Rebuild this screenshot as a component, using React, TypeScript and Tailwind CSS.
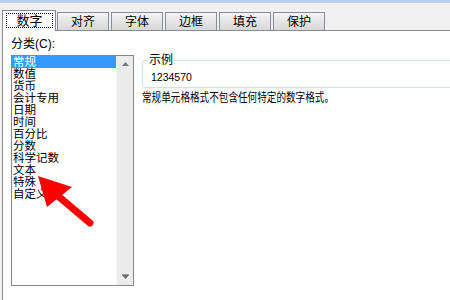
import React from 'react';

const tabs = ['对齐', '字体', '边框', '填充', '保护'];
const categories = ['常规', '数值', '货币', '会计专用', '日期', '时间', '百分比', '分数', '科学记数', '文本', '特殊', '自定义'];

const App: React.FC = () => {
  return (
    <div className="relative h-[300px] w-[450px] overflow-hidden bg-[#f0f0f0] font-['Liberation_Sans','Noto_Sans_CJK_SC',sans-serif] text-black">
      <div className="h-[3px] bg-[#b9d1ea]" />

      {/* tab strip */}
      <div className="flex h-[27px] items-end pl-[2px]">
        <div className="relative z-10 -mb-px h-[21px] w-[54px] border border-b-0 border-[#898c95] bg-white pl-[3px] pt-[2px]">
          <div className="flex h-[15px] w-[47px] items-center justify-center border border-dotted border-black text-[13px] leading-[13px]">
            数字
          </div>
        </div>
        {tabs.map((t, i) => (
          <div
            key={t}
            className={`flex h-[18px] w-[52px] items-center justify-center border border-b-0 border-[#898c95] bg-gradient-to-b from-[#f4f4f4] to-[#d7d7d7] text-[12px] leading-[12px] ${i === 0 ? 'ml-px' : 'ml-[2px]'}`}
          >
            {t}
          </div>
        ))}
      </div>

      {/* page */}
      <div className="ml-[2px] flex h-[270px] border-l border-t border-[#898c95] bg-white">
        <div className="pl-[8px] pt-[7px]">
          <div className="h-[12px] text-[12px] leading-[12px]">分类(C):</div>
          <div className="mt-[5px] flex h-[231px] w-[123px] border border-[#828790]">
            <div className="flex-1">
              {categories.map((c, i) => (
                <div
                  key={c}
                  className={`h-[12px] whitespace-nowrap pl-px text-[11.5px] leading-[12px] ${i === 0 ? 'bg-[#3399ff] text-white' : ''}`}
                >
                  {c}
                </div>
              ))}
            </div>
            <div className="flex w-[17px] flex-col items-center justify-between border-l border-[#f5f5f5] bg-[#ececec] pb-[6px] pt-[6px]">
              <svg width="7" height="4" viewBox="0 0 7 4">
                <polygon points="3.5,0 7,4 0,4" fill="#7a7a7a" />
              </svg>
              <svg width="7" height="5" viewBox="0 0 7 5">
                <rect x="0" y="0" width="7" height="1" fill="#9a9a9a" />
                <polygon points="0,1 7,1 3.5,5" fill="#6a6a6a" />
              </svg>
            </div>
          </div>
        </div>

        <div className="ml-[8px] pt-[23px]">
          <fieldset className="h-[34px] w-[312px] rounded-[3px] border border-[#d5dfe5]">
            <legend className="ml-[5px] px-px text-[12px] leading-[12px]">示例</legend>
            <div className="pl-[8px] pt-[5px] font-['Liberation_Sans',sans-serif] text-[10.5px] leading-[12px]">1234570</div>
          </fieldset>
          <div className="mt-[4px] origin-left scale-x-[0.8] whitespace-nowrap text-[12px] leading-[12px]">
            常规单元格格式不包含任何特定的数字格式。
          </div>
        </div>
      </div>

      {/* red arrow annotation */}
      <svg className="pointer-events-none absolute left-0 top-0" width="450" height="300">
        <line x1="58" y1="196" x2="90" y2="223" stroke="#ff0000" strokeWidth="7" strokeLinecap="round" />
        <polygon points="38,176 47,207 72,187" fill="#ff0000" />
      </svg>
    </div>
  );
};

export default App;
